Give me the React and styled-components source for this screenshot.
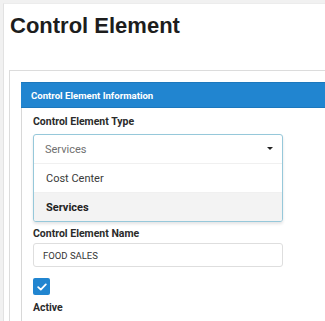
import React from "react";
import styled, { createGlobalStyle } from "styled-components";

const Global = createGlobalStyle`
  html, body { margin: 0; padding: 0; }
  body {
    background: #f1f1f1;
    font-family: Roboto, "Liberation Sans", Arial, sans-serif;
    overflow: hidden;
  }
`;

const Page = styled.div`
  margin: 3px 0 0 3px;
  width: 322px;
  height: 318px;
  overflow: hidden;
  background: #fff;
  border-left: 1px solid #e2e2e2;
  border-top: 1px solid #ececec;
  padding: 0 0 0 5px;
  box-sizing: border-box;
`;

const Title = styled.h1`
  margin: 0;
  padding: 8px 0 0 1px;
  height: 66px;
  box-sizing: border-box;
  font-family: "Liberation Sans", Arial, sans-serif;
  font-weight: bold;
  font-size: 22px;
  line-height: 28px;
  color: #1d1d1d;
`;

const Panel = styled.section`
  border-top: 1px solid #dcdcdc;
  border-left: 1px solid #dcdcdc;
  padding: 11px 0 0 11px;
  height: 300px;
  box-sizing: border-box;
`;

const Card = styled.div`
  border-left: 1px solid #d8d8d8;
  height: 100%;
`;

const CardHeader = styled.div`
  height: 26px;
  box-sizing: border-box;
  background: #2185d0;
  border-top: 1px solid #1c78bd;
  border-bottom: 1px solid #1c78bd;
  margin-left: -1px;
  padding-left: 10px;
  display: flex;
  align-items: center;
  color: #fff;
  font-weight: 700;
  font-size: 9.6px;
`;

const CardBody = styled.div`
  padding: 7px 0 0 11px;
  display: flex;
  flex-direction: column;
`;

const Label = styled.label`
  display: block;
  font-weight: 700;
  font-size: 10.5px;
  line-height: 14px;
  color: #2b2b2b;
  margin-bottom: ${(p) => p.$mb ?? 4}px;
`;

const Dropdown = styled.div`
  width: 250px;
  box-sizing: border-box;
  border: 1px solid #96c8da;
  border-radius: 3px;
  box-shadow: 0 2px 3px 0 rgba(34, 36, 38, 0.12);
  background: #fff;
  margin-bottom: 5px;
`;

const DropdownTrigger = styled.div`
  height: 28px;
  display: flex;
  align-items: center;
  justify-content: space-between;
  padding: 0 9px 0 11px;
  font-size: 11px;
  color: #707070;
`;

const Caret = styled.span`
  width: 0;
  height: 0;
  border-left: 3px solid transparent;
  border-right: 3px solid transparent;
  border-top: 3.5px solid #222;
  margin-top: -1px;
`;

const Option = styled.div`
  height: 28px;
  border-top: 1px solid #f0f0f0;
  display: flex;
  align-items: center;
  padding-left: 12px;
  font-size: 11px;
  color: ${(p) => (p.$selected ? "#222" : "#3a3a3a")};
  font-weight: ${(p) => (p.$selected ? 700 : 400)};
  background: ${(p) => (p.$selected ? "#f3f3f3" : "#fff")};
  &:last-child { border-radius: 0 0 2px 2px; }
`;

const Input = styled.div`
  width: 250px;
  height: 24px;
  box-sizing: border-box;
  border: 1px solid #dedede;
  border-radius: 3px;
  display: flex;
  align-items: center;
  padding-left: 9px;
  font-size: 9.5px;
  color: #333;
  margin-bottom: 11px;
`;

const CheckBox = styled.span`
  width: 17px;
  height: 17px;
  background: #2185d0;
  border-radius: 2px;
  display: flex;
  align-items: center;
  justify-content: center;
  margin-bottom: 6px;
`;

export default function App() {
  return (
    <>
      <Global />
      <Page>
        <Title>Control Element</Title>
        <Panel>
          <Card>
            <CardHeader>Control Element Information</CardHeader>
            <CardBody>
              <Label $mb={5}>Control Element Type</Label>
              <Dropdown>
                <DropdownTrigger>
                  <span>Services</span>
                  <Caret />
                </DropdownTrigger>
                <Option>Cost Center</Option>
                <Option $selected>Services</Option>
              </Dropdown>
              <Label $mb={2}>Control Element Name</Label>
              <Input>FOOD SALES</Input>
              <CheckBox>
                <svg width="10" height="8" viewBox="0 0 10 8">
                  <path d="M1.2 4.2 L3.8 6.6 L8.8 1.4" fill="none" stroke="#fff" strokeWidth="1.8" strokeLinecap="round" strokeLinejoin="round" />
                </svg>
              </CheckBox>
              <Label>Active</Label>
            </CardBody>
          </Card>
        </Panel>
      </Page>
    </>
  );
}
